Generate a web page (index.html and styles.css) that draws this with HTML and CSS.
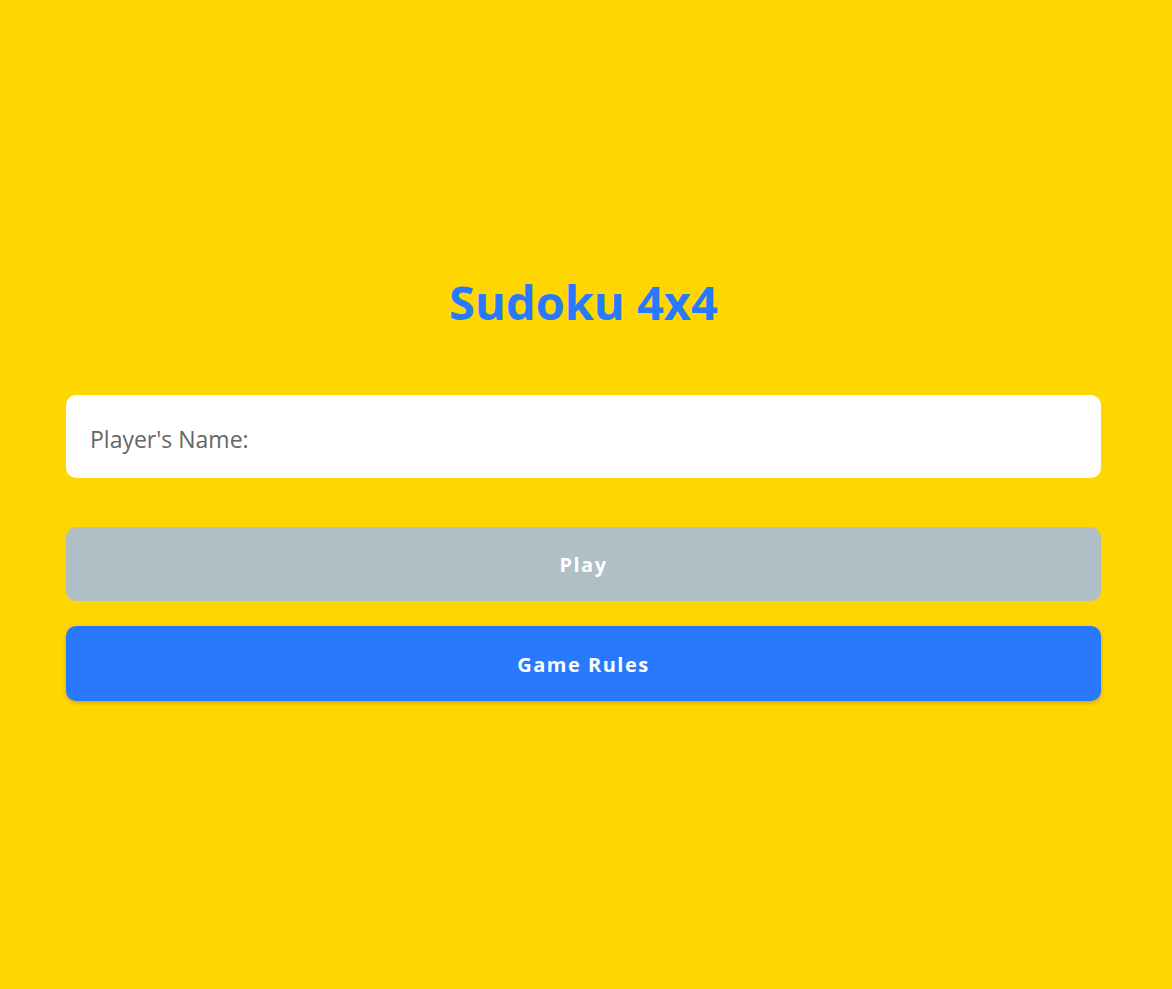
FILE: index.html
```html
<!DOCTYPE html>
<html lang="en">
<head>
<meta charset="utf-8">
<title>Sudoku 4x4</title>
<link rel="stylesheet" href="styles.css">
</head>
<body>
<main class="screen">
  <section class="panel">
    <h1 class="title">Sudoku 4x4</h1>
    <input class="name-input" type="text" placeholder="Player's Name:">
    <div class="actions">
      <button class="btn btn-play" type="button">Play</button>
      <button class="btn btn-rules" type="button">Game Rules</button>
    </div>
  </section>
</main>
</body>
</html>
```

FILE: styles.css
```css
html, body {
  margin: 0;
  padding: 0;
  height: 100%;
}
body {
  background: #FFD700;
  font-family: "Open Sans", "Noto Sans", sans-serif;
}
.screen {
  min-height: 100%;
  display: flex;
  flex-direction: column;
  justify-content: center;
  padding: 0 71px 0 66px;
  box-sizing: border-box;
}
.panel {
  display: flex;
  flex-direction: column;
  padding-bottom: 17px;
}
.title {
  margin: 0 0 63px;
  text-align: center;
  color: #2979FF;
  font-size: 47px;
  font-weight: 700;
  line-height: 60px;
}
.name-input {
  height: 83px;
  border: none;
  border-radius: 10px;
  background: #fff;
  padding: 5px 24px 0;
  font-family: inherit;
  font-size: 23px;
  color: #333;
  outline: none;
  box-sizing: border-box;
}
.name-input::placeholder {
  color: #666;
}
.actions {
  display: flex;
  flex-direction: column;
  gap: 25px;
  margin-top: 49px;
}
.btn {
  height: 74px;
  border: none;
  border-radius: 10px;
  padding: 2px 0 0;
  font-family: inherit;
  font-size: 20px;
  font-weight: 700;
  letter-spacing: 1.5px;
  color: #fff;
  cursor: pointer;
}
.btn-play {
  background: #B0BEC5;
}
.btn-rules {
  height: 75px;
  background: #2979FF;
  box-shadow: 0 2px 4px rgba(0,0,0,0.2);
}
```
